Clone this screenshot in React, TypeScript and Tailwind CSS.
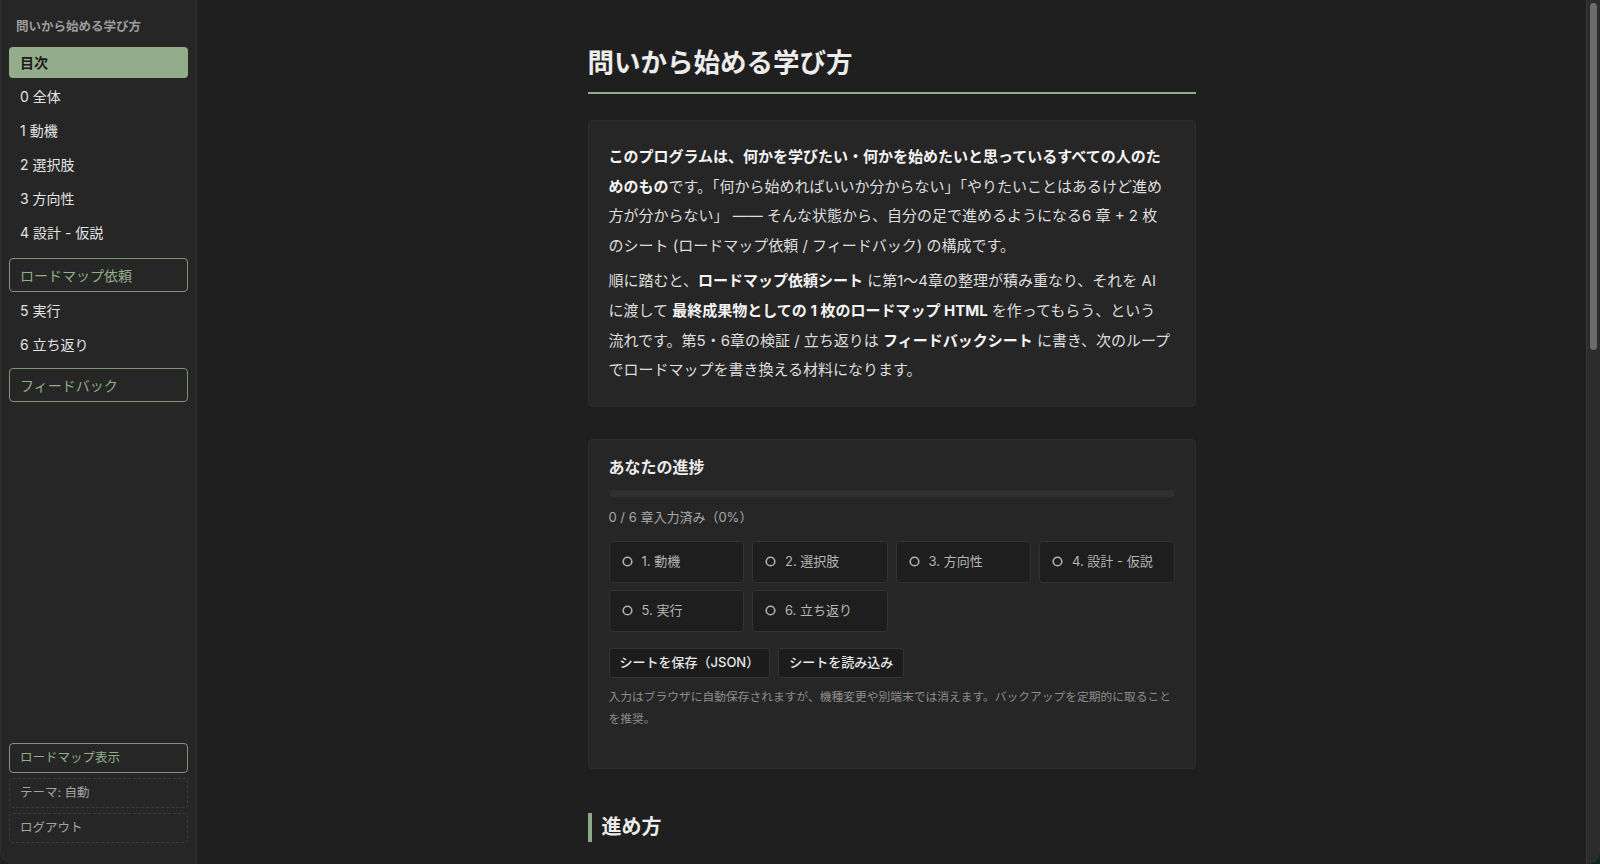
import React from "react";

const chapters = ["1. 動機", "2. 選択肢", "3. 方向性", "4. 設計 - 仮説", "5. 実行", "6. 立ち返り"];

function NavItem({ label, active }: { label: string; active?: boolean }) {
  return (
    <div
      className={`mt-[3px] flex h-[31px] items-center rounded-[4px] px-[11px] text-[14px] ${
        active ? "bg-[#93ad8a] font-bold text-[#1b1b1b]" : "text-[#e2e2e2]"
      }`}
    >
      {label}
    </div>
  );
}

function NavBox({ label, className }: { label: string; className: string }) {
  return (
    <div
      className={`flex h-[34px] items-center rounded-[4px] border border-[#7d9676] px-[10px] text-[14px] text-[#93ad8a] ${className}`}
    >
      {label}
    </div>
  );
}

function Circle() {
  return (
    <svg width="11" height="11" viewBox="0 0 11 11" className="shrink-0">
      <circle cx="5.5" cy="5.5" r="4.3" fill="none" stroke="#b0b0b0" strokeWidth="1.6" />
    </svg>
  );
}

export default function App() {
  return (
    <div className="h-[864px] w-full overflow-hidden bg-[#16241f] font-['Inter','Noto_Sans_CJK_JP',sans-serif]">
      <div className="flex h-full overflow-hidden rounded-b-[12px] bg-[#1f1f1f]">
        {/* Sidebar */}
        <aside className="flex w-[197px] shrink-0 flex-col rounded-bl-[12px] border-r border-l border-[#313131] bg-[#262626] px-[8px] pt-[19px] pb-[21px]">
          <div className="pl-[7px] text-[12.5px] font-bold leading-[16px] text-[#9c9c9c]">問いから始める学び方</div>
          <div className="mt-[9px]">
            <NavItem label="目次" active />
            <NavItem label="0 全体" />
            <NavItem label="1 動機" />
            <NavItem label="2 選択肢" />
            <NavItem label="3 方向性" />
            <NavItem label="4 設計 - 仮説" />
            <NavBox label="ロードマップ依頼" className="mt-[10px]" />
            <NavItem label="5 実行" />
            <NavItem label="6 立ち返り" />
            <NavBox label="フィードバック" className="mt-[8px]" />
          </div>
          <div className="flex-1" />
          <div className="flex h-[30px] items-center rounded-[4px] border border-[#7d9676] px-[10px] text-[12.5px] text-[#93ad8a]">
            ロードマップ表示
          </div>
          <div className="mt-[5px] flex h-[30px] items-center rounded-[4px] border border-dashed border-[#3a3a3a] px-[10px] text-[12.5px] text-[#a3a3a3]">
            テーマ: 自動
          </div>
          <div className="mt-[5px] flex h-[30px] items-center rounded-[4px] border border-dashed border-[#3a3a3a] px-[10px] text-[12.5px] text-[#a3a3a3]">
            ログアウト
          </div>
        </aside>

        {/* Main */}
        <main className="flex-1 overflow-hidden">
          <div className="mx-auto w-[608px] pt-[44px]">
            <h1 className="border-b-2 border-[#93ab8b] pb-[12px] text-[26.5px] font-bold leading-[36px] text-[#ececec]">
              問いから始める学び方
            </h1>

            <section className="mt-[26px] rounded-[4px] border border-[#2c2c2c] bg-[#262626] px-5 py-[21px] text-[15px] leading-[29.6px] text-[#dedede]">
              <p>
                <b className="text-[#f5f5f5]">このプログラムは、何かを学びたい・何かを始めたいと思っているすべての人のためのもの</b>
                です。「何から始めればいいか分からない」「やりたいことはあるけど進め方が分からない」 —— そんな状態から、自分の足で進めるようになる6 章 + 2 枚
                <br />
                のシート (ロードマップ依頼 / フィードバック) の構成です。
              </p>
              <p className="mt-[6px]">
                順に踏むと、<b className="text-[#f5f5f5]">ロードマップ依頼シート</b> に第1〜4章の整理が積み重なり、それを AI に渡して{" "}
                <b className="text-[#f5f5f5]">最終成果物としての 1 枚のロードマップ HTML</b> を作ってもらう、という
                <br />
                流れです。第5・6章の検証 / 立ち返りは <b className="text-[#f5f5f5]">フィードバックシート</b> に書き、次のループでロードマップを書き換える材料になります。
              </p>
            </section>

            <section className="mt-[32px] rounded-[4px] border border-[#2c2c2c] bg-[#262626] px-5 pt-[17px] pb-[38px]">
              <h2 className="text-[16px] font-bold leading-[20px] text-[#ececec]">あなたの進捗</h2>
              <div className="mt-[13px] h-[7px] rounded-full bg-[#2f2f2f]" />
              <div className="mt-[10px] text-[13px] leading-[20px] text-[#a8a8a8]">0 / 6 章入力済み（0%）</div>
              <div className="mt-[14px] grid grid-cols-4 gap-x-[8px] gap-y-[7px]">
                {chapters.map(c => (
                  <div
                    key={c}
                    className="flex h-[42px] items-center gap-[9px] rounded-[4px] border border-[#333333] bg-[#1e1e1e] pl-[12px] text-[13px] text-[#b5b5b5]"
                  >
                    <Circle />
                    {c}
                  </div>
                ))}
              </div>
              <div className="mt-[16px] flex gap-[8px]">
                <button className="h-[30px] rounded-[3px] border border-[#333333] bg-[#1c1c1c] px-[10px] text-[13px] font-medium text-[#e8e8e8]">
                  シートを保存（JSON）
                </button>
                <button className="h-[30px] rounded-[3px] border border-[#333333] bg-[#1c1c1c] px-[10px] text-[13px] font-medium text-[#e8e8e8]">
                  シートを読み込み
                </button>
              </div>
              <p className="mt-[8px] text-[11.75px] leading-[22px] text-[#8c8c8c]">
                入力はブラウザに自動保存されますが、機種変更や別端末では消えます。バックアップを定期的に取ることを推奨。
              </p>
            </section>

            <h2 className="mt-[44px] border-l-4 border-[#8fa886] pl-[10px] text-[20px] font-bold leading-[29px] text-[#ececec]">
              進め方
            </h2>
          </div>
        </main>

        {/* Scrollbar */}
        <div className="flex w-[14px] shrink-0 justify-center rounded-br-[12px] border-l border-[#383838] bg-[#2c2c2c] pt-[3px]">
          <div className="h-[347px] w-[7px] rounded-full bg-[#6b6b6b]" />
        </div>
      </div>
    </div>
  );
}
